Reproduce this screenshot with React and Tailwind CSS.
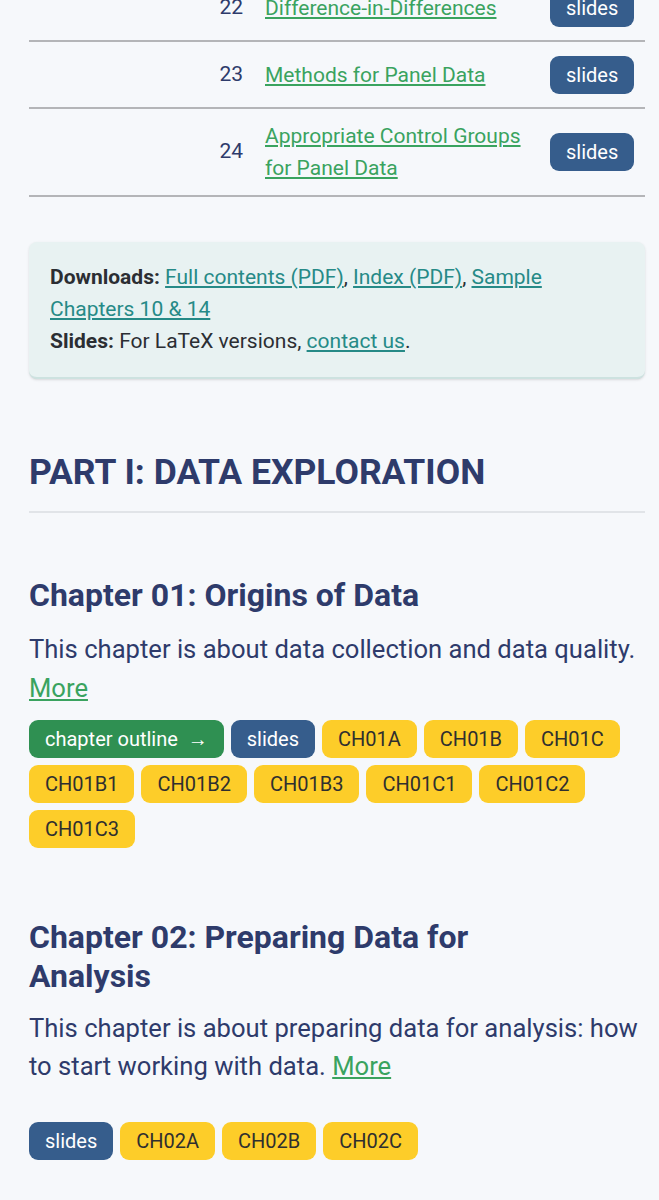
import React from 'react';

const rows = [
  { n: 22, title: 'Difference-in-Differences' },
  { n: 23, title: 'Methods for Panel Data' },
  { n: 24, title: 'Appropriate Control Groups for Panel Data' },
];

const tagBase = 'inline-flex h-[38px] items-center rounded-[9px] px-4 text-[20px] leading-none';

function Slides() {
  return <span className={`${tagBase} bg-[#365d8c] text-white`}>slides</span>;
}

function CodeTag({ label }) {
  return <span className={`${tagBase} bg-[#fdcd29] text-[#2f2f2f]`}>{label}</span>;
}

export default function App() {
  return (
    <div className="min-h-screen overflow-hidden bg-[#f6f8fb] font-['Roboto',sans-serif] text-[#2e3b6b]">
      <div className="mx-[29px] mr-[14px]">
        {/* Chapter table (scrolled, first row cut off) */}
        <div className="-mt-[25px]">
          {rows.map((row) => (
            <div key={row.n} className="flex items-center border-b-2 border-[#b4b5b8] py-[11px]">
              <div className="flex min-h-[43px] w-full items-center">
                <div className="w-[214px] text-right text-[21px]">{row.n}</div>
                <div className="w-[292px] pl-[22px] pr-[12px] text-[21px] leading-[32px]">
                  <a href="#" className="text-[#3aa35f] underline underline-offset-2">
                    {row.title}
                  </a>
                </div>
                <div className="flex flex-1 justify-start pl-[15px]">
                  <Slides />
                </div>
              </div>
            </div>
          ))}
        </div>

        {/* Downloads box */}
        <div className="mt-[45px] rounded-lg border-b-2 border-[#cde2e0] bg-[#e8f2f2] px-[21px] pt-[19px] pb-[20px] text-[21px] leading-[32px] text-[#2b2e33] shadow-sm">
          <p>
            <b>Downloads:</b>{' '}
            <a href="#" className="text-[#268a87] underline underline-offset-2">Full contents (PDF)</a>,{' '}
            <a href="#" className="text-[#268a87] underline underline-offset-2">Index (PDF)</a>,{' '}
            <a href="#" className="text-[#268a87] underline underline-offset-2">Sample Chapters 10 &amp; 14</a>
          </p>
          <p>
            <b>Slides:</b> For LaTeX versions,{' '}
            <a href="#" className="text-[#268a87] underline underline-offset-2">contact us</a>.
          </p>
        </div>

        {/* Part heading */}
        <h2 className="mt-[72px] border-b-2 border-[#e1e4e8] pb-[18px] text-[35.5px] leading-[42px] font-bold text-[#2e3b6b]">
          PART I: DATA EXPLORATION
        </h2>

        {/* Chapter 01 */}
        <section className="mt-[63px]">
          <h3 className="max-w-[470px] text-[32px] leading-[38.4px] font-bold">Chapter 01: Origins of Data</h3>
          <p className="mt-[16px] text-[25.6px] leading-[38.4px]">
            This chapter is about data collection and data quality.{' '}
            <a href="#" className="text-[#3aa35f] underline underline-offset-2">More</a>
          </p>
          <div className="mt-[13px] flex flex-wrap gap-[7px]">
            <span className={`${tagBase} bg-[#2f9052] text-white`}>chapter outline&nbsp; →</span>
            <Slides />
            {['CH01A', 'CH01B', 'CH01C', 'CH01B1', 'CH01B2', 'CH01B3', 'CH01C1', 'CH01C2', 'CH01C3'].map((t) => (
              <CodeTag key={t} label={t} />
            ))}
          </div>
        </section>

        {/* Chapter 02 */}
        <section className="mt-[70px] pb-10">
          <h3 className="max-w-[470px] text-[32px] leading-[38.4px] font-bold">Chapter 02: Preparing Data for Analysis</h3>
          <p className="mt-[14px] text-[25.6px] leading-[38.4px]">
            This chapter is about preparing data for analysis: how to start working with data.{' '}
            <a href="#" className="text-[#3aa35f] underline underline-offset-2">More</a>
          </p>
          <div className="mt-[36px] flex flex-wrap gap-[7px]">
            <Slides />
            {['CH02A', 'CH02B', 'CH02C'].map((t) => (
              <CodeTag key={t} label={t} />
            ))}
          </div>
        </section>
      </div>
    </div>
  );
}
